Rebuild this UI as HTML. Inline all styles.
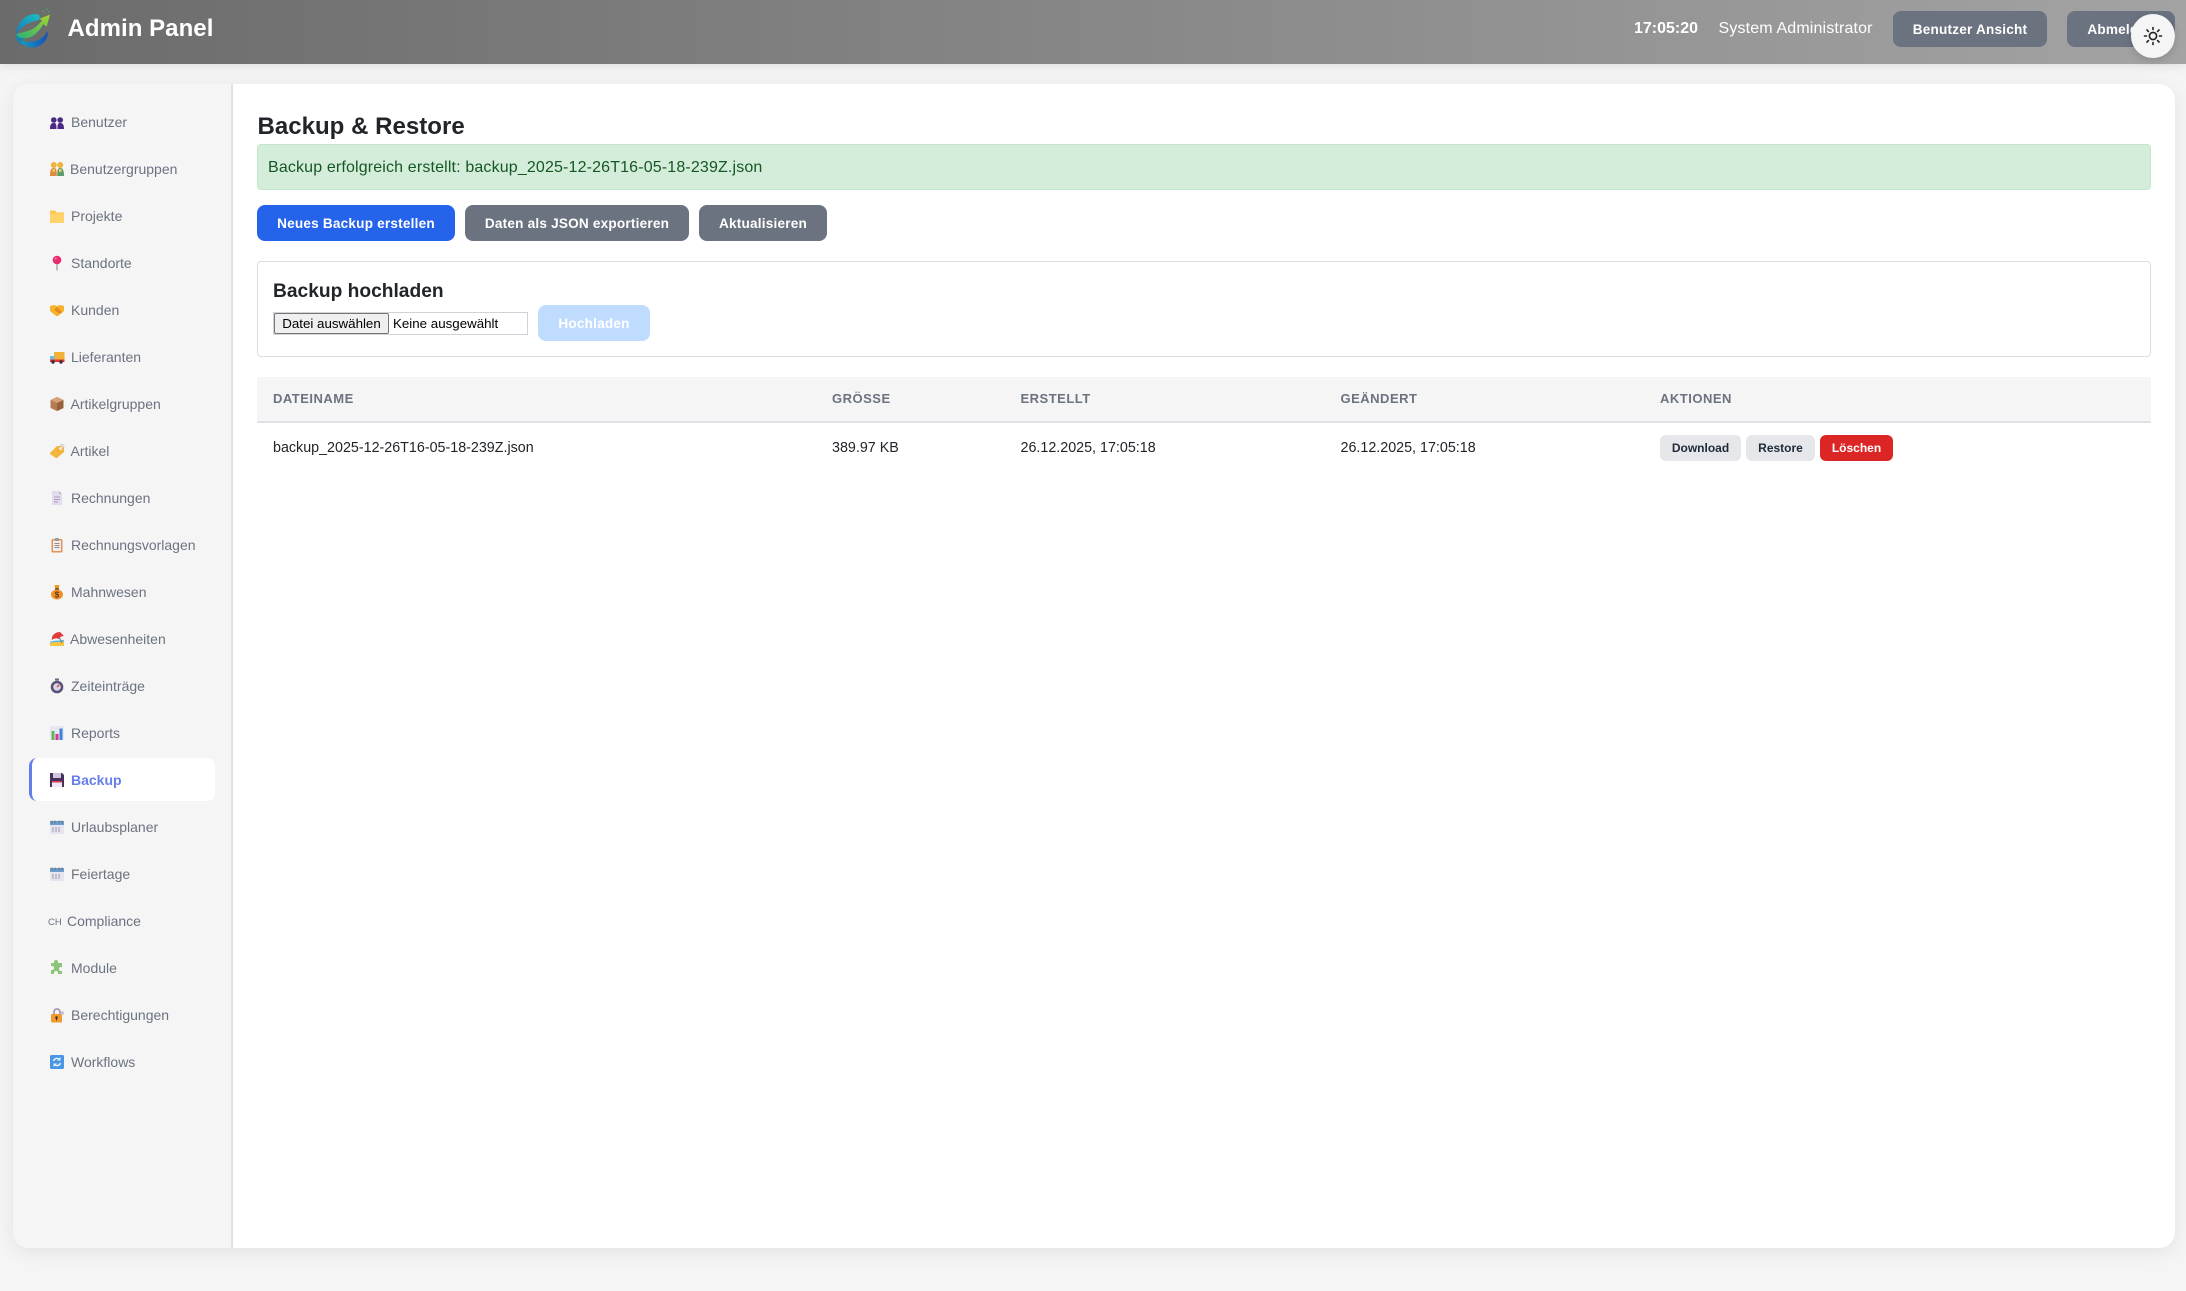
<!DOCTYPE html>
<html lang="de"><head><meta charset="utf-8"><title>Admin Panel</title>
<style>
*{box-sizing:border-box}
html,body{margin:0;padding:0}
body{width:2186px;height:1291px;background:#f5f5f5;font-family:"Liberation Sans",sans-serif;position:relative;overflow:hidden;color:#212529}
.a{position:absolute;white-space:nowrap}
header{position:absolute;left:0;top:0;width:2186px;height:64px;background:linear-gradient(90deg,#6b6b6b,#a3a3a3);box-shadow:0 2px 10px rgba(0,0,0,.1)}
.btn{position:absolute;display:flex;align-items:center;justify-content:center;height:36px;border-radius:8px;color:#fff;font-weight:700;font-size:13.6px;letter-spacing:.2px;white-space:nowrap;background:#6b7280}
#main{position:absolute;left:13px;top:84px;width:2162px;height:1164px;background:#fff;border-radius:16px;box-shadow:0 4px 20px rgba(0,0,0,.08);overflow:hidden}
#side{position:absolute;left:0;top:0;width:220px;height:1164px;background:#f5f5f5;border-right:2px solid #dee2e6}
.it{position:absolute;left:58px;font-size:14px;line-height:20px;color:#6b7280;white-space:nowrap}
.ic{position:absolute;left:49px;width:16px;height:16px}
.hd{position:absolute;top:389px;font-size:13px;line-height:20px;font-weight:700;letter-spacing:.5px;color:#6b7280;white-space:nowrap}
.td{position:absolute;top:438px;font-size:14.3px;line-height:20px;color:#212529;white-space:nowrap}
.sb{position:absolute;top:435px;height:26px;border-radius:6px;font-size:12px;font-weight:700;display:flex;align-items:center;justify-content:center;background:#e5e7eb;color:#1f2937;white-space:nowrap}
</style></head><body>
<header></header>
<svg class="a" style="left:8px;top:4px" width="50" height="50" viewBox="0 0 150 150">
<defs>
<linearGradient id="gg" x1="0" y1="1" x2="1" y2="0"><stop offset="0" stop-color="#26b07a"/><stop offset="1" stop-color="#a6d62a"/></linearGradient>
<linearGradient id="tt" x1="1" y1="0" x2="0" y2="1"><stop offset="0" stop-color="#1cc0c0"/><stop offset="1" stop-color="#1478c0"/></linearGradient>
<linearGradient id="bb" x1="0" y1="0" x2="1" y2="0"><stop offset="0" stop-color="#12a0c8"/><stop offset="1" stop-color="#1650b4"/></linearGradient>
</defs>
<path d="M92 32C60 24 28 50 24 92C38 72 55 55 88 50C96 48 97 38 92 32Z" fill="url(#tt)"/>
<path d="M24 92C24 106 30 116 42 124C38 114 42 106 50 100C40 100 30 98 24 92Z" fill="#0f86b8"/>
<path d="M36 110C50 136 96 140 115 105C120 95 120 88 118 82C110 100 90 112 70 113C55 114 45 112 36 110Z" fill="url(#bb)"/>
<path d="M24 92C35 106 60 108 80 92C92 82 100 70 106 60L116 68L126 32L94 44L102 50C92 62 82 72 68 78C50 85 35 85 24 92Z" fill="url(#gg)"/>
<g fill="#4aa86a"><rect x="103" y="19" width="4" height="4"/><rect x="114" y="14" width="4" height="4"/><rect x="121" y="21" width="4" height="4"/><rect x="111" y="27" width="3" height="3"/></g>
</svg>
<div class="a" style="left:67.500px;top:14px;font-size:24px;line-height:29px;font-weight:700;color:#fff;letter-spacing:.05px">Admin Panel</div>
<div class="a" style="left:1634px;top:19px;font-size:16px;line-height:20px;font-weight:700;color:#fff">17:05:20</div>
<div class="a" style="left:1718.500px;top:19px;font-size:16px;line-height:20px;color:#fff;letter-spacing:.15px">System Administrator</div>
<div class="btn" style="left:1893px;top:11px;width:154px">Benutzer Ansicht</div>
<div class="btn" style="left:2067px;top:11px;width:108px">Abmelden</div>
<div class="a" style="left:2131px;top:14px;width:44px;height:44px;border-radius:50%;background:#f5f5f5;box-shadow:0 2px 8px rgba(0,0,0,.15)"></div>
<svg class="a" style="left:2143px;top:26px" width="20" height="20" viewBox="0 0 20 20" fill="none" stroke="#222" stroke-width="1.6" stroke-linecap="round"><circle cx="10" cy="10" r="3.6"/><path d="M10 1.500v2M10 16.500v2M1.500 10h2M16.500 10h2M4 4l1.400 1.400M14.600 14.600L16 16M4 16l1.400-1.400M14.600 5.400L16 4"/></svg>

<div id="main"><div id="side"></div></div>

<div class="a" style="left:29px;top:758px;width:186px;height:43px;background:#fff;border-left:3px solid #667eea;border-radius:8px"></div>

<div class="a it" style="left:71px;top:112px">Benutzer</div>
<div class="a it" style="left:70px;top:159px">Benutzergruppen</div>
<div class="a it" style="left:71px;top:206px">Projekte</div>
<div class="a it" style="left:71px;top:253px">Standorte</div>
<div class="a it" style="left:71px;top:300px">Kunden</div>
<div class="a it" style="left:71px;top:347px">Lieferanten</div>
<div class="a it" style="left:70.500px;top:394px">Artikelgruppen</div>
<div class="a it" style="left:70.500px;top:441px">Artikel</div>
<div class="a it" style="left:71px;top:488px">Rechnungen</div>
<div class="a it" style="left:71px;top:535px">Rechnungsvorlagen</div>
<div class="a it" style="left:71px;top:582px">Mahnwesen</div>
<div class="a it" style="left:70px;top:629px">Abwesenheiten</div>
<div class="a it" style="left:71px;top:676px">Zeiteinträge</div>
<div class="a it" style="left:71px;top:723px">Reports</div>
<div class="a it" style="left:71px;top:770px;color:#667eea;font-weight:700">Backup</div>
<div class="a it" style="left:71px;top:817px">Urlaubsplaner</div>
<div class="a it" style="left:71px;top:864px">Feiertage</div>
<div class="a it" style="left:67px;top:911px">Compliance</div>
<div class="a it" style="left:71px;top:958px">Module</div>
<div class="a it" style="left:71px;top:1005px">Berechtigungen</div>
<div class="a it" style="left:71px;top:1052px">Workflows</div>
<div class="a" style="left:48px;top:916px;font-size:9.500px;line-height:14px;color:#6b7280">CH</div>

<svg class="ic" style="top:115px" viewBox="0 0 16 16" fill="#4b2a84"><circle cx="4.800" cy="5" r="2.800"/><circle cx="11.200" cy="5" r="2.800"/><path d="M1 14c0-5 1.500-6 3.800-6S7.500 9 7.500 14zM8.500 14c0-5 .5-6 2.700-6s3.800 1 3.800 6z"/></svg>
<svg class="ic" style="top:161px" viewBox="0 0 16 16"><circle cx="4.800" cy="4" r="3" fill="#eeb33d"/><circle cx="11.200" cy="4" r="3" fill="#eeb33d"/><path d="M1 15c0-6 1-8 3.800-8S7.800 9 7.800 15z" fill="#e08b3c"/><path d="M8.200 15c0-6 .5-8 3-8S15 9 15 15z" fill="#57a06b"/><rect x="3.500" y="8" width="2.500" height="3" fill="#f5c45e"/><rect x="10" y="8" width="2.500" height="3" fill="#f5c45e"/></svg>
<svg class="ic" style="top:208px" viewBox="0 0 16 16"><path d="M1 3.500a1 1 0 011-1h4l1.500 2H14a1 1 0 011 1V14a1 1 0 01-1 1H2a1 1 0 01-1-1z" fill="#ffc44d"/><rect x="1" y="5.500" width="14" height="9.500" rx="1" fill="#ffd26a"/></svg>
<svg class="ic" style="top:255px" viewBox="0 0 16 16"><rect x="7.400" y="7" width="1.200" height="8.500" fill="#9a9a9a"/><circle cx="8" cy="5" r="4.300" fill="#ea2a6e"/><circle cx="6.700" cy="3.600" r="1" fill="#f784ab"/></svg>
<svg class="ic" style="top:302px" viewBox="0 0 16 16"><path d="M1 4l4-1 3 1 3-1 4 1v5l-6 5H7L1 9z" fill="#f7b32d"/><path d="M5 8l3-3 5 5-2 2z" fill="#e88a1e"/></svg>
<svg class="ic" style="top:349px" viewBox="0 0 16 16"><rect x="5" y="3" width="10.500" height="8.500" fill="#f2b137"/><path d="M1 7h4.500v4.500H1z" fill="#6fb8e0"/><rect x="1" y="10.500" width="14.500" height="2.500" fill="#de3a2c"/><circle cx="4" cy="13" r="1.700" fill="#3a2a4a"/><circle cx="12" cy="13" r="1.700" fill="#3a2a4a"/></svg>
<svg class="ic" style="top:396px" viewBox="0 0 16 16"><path d="M8 1l6.500 3v8L8 15l-6.500-3V4z" fill="#b77b52"/><path d="M8 7l6.500-3v8L8 15z" fill="#96603c"/><path d="M1.500 4L8 1l6.500 3L8 7z" fill="#d6a27a"/></svg>
<svg class="ic" style="top:443px" viewBox="0 0 16 16"><path d="M1 10l7-7h5l2 2v4l-7 6a1 1 0 01-1 0l-6-4z" fill="#f4b63a"/><circle cx="11.800" cy="5.400" r="1.500" fill="#fff"/><circle cx="13" cy="3.500" r="2" fill="none" stroke="#bbb" stroke-width=".7"/></svg>
<svg class="ic" style="top:490px" viewBox="0 0 16 16"><path d="M3 1h7l3 3v11H3z" fill="#e3dcee"/><path d="M10 1l3 3h-3z" fill="#b9afcf"/><path d="M5 7h6M5 9.500h6M5 12h4" stroke="#a99dc2" stroke-width="1"/></svg>
<svg class="ic" style="top:537px" viewBox="0 0 16 16"><rect x="2.500" y="2" width="11" height="13.500" rx="1" fill="#e0945c"/><rect x="4" y="3.500" width="8" height="10.500" fill="#f4ece6"/><rect x="6" y="1" width="4" height="3" fill="#9b9ba5"/><path d="M5.500 6.500h5M5.500 8.500h5M5.500 10.500h5" stroke="#8f8f99" stroke-width=".9"/></svg>
<svg class="ic" style="top:584px" viewBox="0 0 16 16"><path d="M5.500 1h5L9.500 5h-3z" fill="#e59a23"/><rect x="6" y="4.300" width="4" height="1.300" fill="#5b3a1c"/><ellipse cx="8" cy="10.500" rx="6" ry="5" fill="#ef8f28"/><text x="8" y="13.500" font-size="8" font-weight="700" text-anchor="middle" fill="#5b3a1c" font-family="Liberation Sans">$</text></svg>
<svg class="ic" style="top:631px" viewBox="0 0 16 16"><path d="M1 11l14-2v6H1z" fill="#f7c544"/><path d="M1 11c4-2 8-1 14-2v1.500c-5 1-10 0-14 1.500z" fill="#58b7e8"/><path d="M3 9c-1-4 3-8 8-8l4 4c-2 0-4 1-5 3-2-1-5-1-7 1z" fill="#e23b3b"/><path d="M10 6l3 6" stroke="#777" stroke-width="1"/></svg>
<svg class="ic" style="top:678px" viewBox="0 0 16 16"><rect x="6" y=".5" width="4" height="2" fill="#6d6582"/><circle cx="8" cy="9" r="6.300" fill="#5a5078"/><circle cx="8" cy="9" r="3.800" fill="#d9d4e6"/><path d="M8 9l2.200-2.200" stroke="#d83a3a" stroke-width="1.300"/></svg>
<svg class="ic" style="top:725px" viewBox="0 0 16 16"><rect x="1" y="1" width="14" height="14" fill="#e8e6ef"/><rect x="2.500" y="6" width="3" height="9" fill="#5cb85c"/><rect x="6.500" y="9" width="3" height="6" fill="#e8308a"/><rect x="10.500" y="3.500" width="3" height="11.500" fill="#3a86d8"/></svg>
<svg class="ic" style="top:772px" viewBox="0 0 16 16"><path d="M1 1h12l2 2v12H1z" fill="#47325f"/><rect x="4" y="1" width="8" height="5" fill="#cfc8dd"/><rect x="3" y="9" width="10" height="6" fill="#efe9f5"/><rect x="3" y="9" width="10" height="1.500" fill="#e23a4c"/></svg>
<svg class="ic" style="top:819px" viewBox="0 0 16 16"><rect x="1" y="2" width="14" height="13" rx="1" fill="#e6e4ee"/><rect x="1" y="2" width="14" height="4" fill="#6a9fd0"/><path d="M3 1.500v3M6 1.500v3M10 1.500v3M13 1.500v3" stroke="#666" stroke-width=".8"/><path d="M4 8v5M7 8v5M10 8v5" stroke="#9a9aa8" stroke-width="1"/></svg>
<svg class="ic" style="top:866px" viewBox="0 0 16 16"><rect x="1" y="2" width="14" height="13" rx="1" fill="#e6e4ee"/><rect x="1" y="2" width="14" height="4" fill="#6a9fd0"/><path d="M3 1.500v3M6 1.500v3M10 1.500v3M13 1.500v3" stroke="#666" stroke-width=".8"/><path d="M4 8v5M7 8v5M10 8v5" stroke="#9a9aa8" stroke-width="1"/></svg>
<svg class="ic" style="top:960px" viewBox="0 0 16 16"><path d="M5 2a2 2 0 014 0v1h4v4h-1a2 2 0 000 4h1v3H9v-1a2 2 0 00-4 0v1H2v-4h1a2 2 0 000-4H2V3h3z" fill="#8cc47a"/></svg>
<svg class="ic" style="top:1007px" viewBox="0 0 16 16"><path d="M5 8V5a3 3 0 016 0v3" fill="none" stroke="#a69ab8" stroke-width="1.800"/><rect x="2" y="7" width="11" height="8.500" rx="1" fill="#f09a30"/><circle cx="7.500" cy="10.500" r="1.300" fill="#4a3220"/><rect x="7" y="11" width="1" height="2.500" fill="#4a3220"/><circle cx="13.500" cy="6" r="1.700" fill="#c9bfd6"/></svg>
<svg class="ic" style="top:1054px" viewBox="0 0 16 16"><rect x="1" y="1" width="14" height="14" rx="1.500" fill="#4a96e4"/><path d="M4.500 7a3.600 3.600 0 016-1.500M11.500 9a3.600 3.600 0 01-6 1.500" fill="none" stroke="#e8f2fc" stroke-width="1.500"/><path d="M11.500 3v3.500H8zM4.500 13V9.500H8z" fill="#e8f2fc"/></svg>

<div class="a" style="left:257.500px;top:112px;font-size:24px;line-height:29px;font-weight:700;color:#212529;letter-spacing:.03px">Backup &amp; Restore</div>
<div class="a" style="left:257px;top:144px;width:1894px;height:46px;background:#d4edda;border:1px solid #c3e6cb;border-radius:4px;padding:0 10px;font-size:16px;line-height:45px;color:#155724;letter-spacing:.15px">Backup erfolgreich erstellt: backup_2025-12-26T16-05-18-239Z.json</div>

<div class="btn" style="left:257px;top:205px;width:198px;background:#2563eb">Neues Backup erstellen</div>
<div class="btn" style="left:465px;top:205px;width:224px">Daten als JSON exportieren</div>
<div class="btn" style="left:699px;top:205px;width:128px">Aktualisieren</div>

<div class="a" style="left:257px;top:261px;width:1894px;height:96px;background:#fff;border:1px solid #ddd;border-radius:4px"></div>
<div class="a" style="left:273px;top:280px;font-size:19.200px;line-height:23px;font-weight:700;color:#212529">Backup hochladen</div>
<div class="a" style="left:273px;top:312px;width:255px;height:23px;background:#fff;border:1px solid #ced4da"></div>
<div class="a" style="left:274px;top:313px;width:115px;height:21px;background:#efefef;border:1px solid #767676;border-radius:2px;font-size:13.330px;line-height:19px;text-align:center;color:#000">Datei auswählen</div>
<div class="a" style="left:393px;top:313px;font-size:13.330px;line-height:21px;color:#000">Keine ausgewählt</div>
<div class="btn" style="left:538px;top:305px;width:112px;background:#bfdbfe">Hochladen</div>

<div class="a" style="left:257px;top:377px;width:1894px;height:46px;background:#f5f5f5;border-bottom:2px solid #dee2e6"></div>
<div class="hd" style="left:273px">DATEINAME</div>
<div class="hd" style="left:832px">GRÖSSE</div>
<div class="hd" style="left:1020.500px">ERSTELLT</div>
<div class="hd" style="left:1340.500px">GEÄNDERT</div>
<div class="hd" style="left:1660px">AKTIONEN</div>

<div class="td" style="left:273px">backup_2025-12-26T16-05-18-239Z.json</div>
<div class="td" style="left:832px">389.97 KB</div>
<div class="td" style="left:1020.500px">26.12.2025, 17:05:18</div>
<div class="td" style="left:1340.500px">26.12.2025, 17:05:18</div>
<div class="sb" style="left:1660px;width:81px">Download</div>
<div class="sb" style="left:1746px;width:69px">Restore</div>
<div class="sb" style="left:1820px;width:73px;background:#dc2626;color:#fff">Löschen</div>
</body></html>
